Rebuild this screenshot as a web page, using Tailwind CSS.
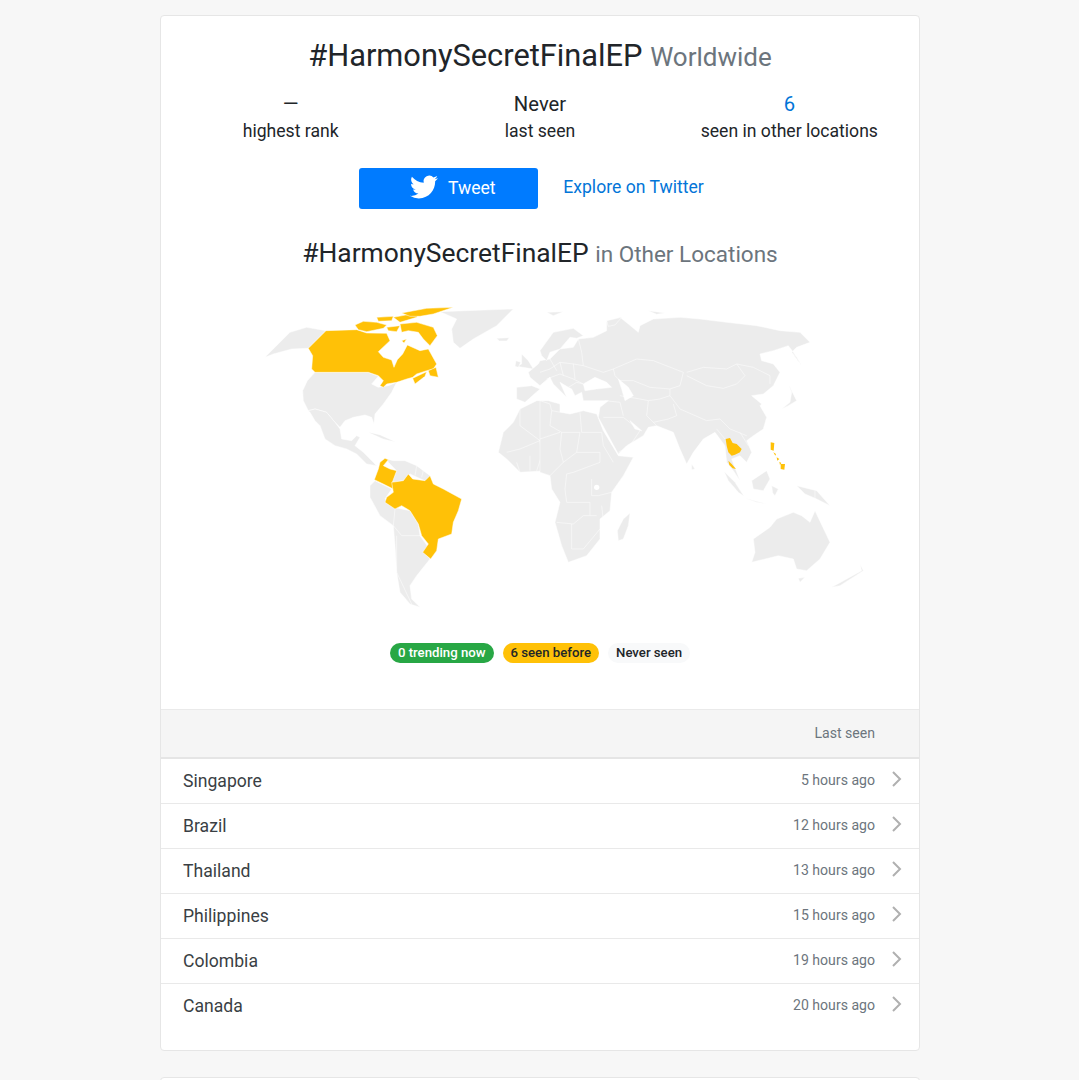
<!DOCTYPE html>
<html>
<head>
<meta charset="utf-8">
<script src="https://cdn.jsdelivr.net/npm/@tailwindcss/browser@4"></script>
</head>
<body class="bg-[#f7f7f7] font-['Roboto',sans-serif] text-[#212529] overflow-hidden h-[1080px]">
<main class="ml-[160px] w-[760px] pt-[15px]">
  <section class="bg-white border border-[#e6e6e6] rounded-[4px] h-[1036px] flex flex-col">
    <h1 class="h-[75px] pt-[20px] text-center text-[30.8px] leading-[40px]">#HarmonySecretFinalEP <span class="text-[26px] text-[#6c757d]">Worldwide</span></h1>
    <div class="grid grid-cols-3 px-[5px] text-center text-[17.6px] leading-[27px]">
      <div><div class="text-[20.24px]">—</div><div>highest rank</div></div>
      <div><div class="text-[20.24px]">Never</div><div>last seen</div></div>
      <div><div class="text-[20.24px] text-[#0275d8]">6</div><div>seen in other locations</div></div>
    </div>
    <div class="flex justify-center items-start mt-[23px] mr-[17px]">
      <a class="w-[179px] h-[41px] pl-[8px] bg-[#007bff] rounded-[3px] flex items-center justify-center gap-[10px] text-white text-[17.6px]">
        <svg class="w-[28px] h-[28px] -mt-[3px]" viewBox="0 0 24 24" fill="#fff"><path d="M23.953 4.57a10 10 0 01-2.825.775 4.958 4.958 0 002.163-2.723c-.951.555-2.005.959-3.127 1.184a4.92 4.92 0 00-8.384 4.482C7.69 8.095 4.067 6.13 1.64 3.162a4.822 4.822 0 00-.666 2.475c0 1.71.87 3.213 2.188 4.096a4.904 4.904 0 01-2.228-.616v.06a4.923 4.923 0 003.946 4.827 4.996 4.996 0 01-2.212.085 4.936 4.936 0 004.604 3.417 9.867 9.867 0 01-6.102 2.105c-.39 0-.779-.023-1.17-.067a13.995 13.995 0 007.557 2.209c9.053 0 13.998-7.496 13.998-13.985 0-.21 0-.42-.015-.63A9.935 9.935 0 0024 4.59z"/></svg>
        <span>Tweet</span>
      </a>
      <a class="ml-[25px] mt-[6px] text-[17.6px] leading-[27px] text-[#0275d8]">Explore on Twitter</a>
    </div>
    <h2 class="mt-[26px] h-[36px] text-center text-[26.4px] leading-[36px]">#HarmonySecretFinalEP <span class="text-[22.5px] text-[#6c757d]">in Other Locations</span></h2>
    <svg class="block w-[758px] h-[330px] mt-[18px] shrink-0" viewBox="161 290 758 330">
      <g transform="translate(220 290) scale(.33333)" fill="#ececec" stroke="#fff" stroke-width="1.5" stroke-linejoin="round">
        <path d="M135 205L175 165L210 130L260 115L318 125L265 178L215 180L160 195Z"/>
        <path d="M660 68L880 60L830 110L760 150L720 178L700 160L695 120L710 90Z"/>
        <path d="M830 148L868 146L860 156L838 156Z"/>
        <path d="M285 250L445 250L475 262L455 285L475 295L505 290L530 280L515 310L490 345L465 375L462 405L455 385L435 378L400 385L375 395L360 415L345 400L320 370L285 360L265 365L250 335L248 305L262 275Z"/>
        <path d="M265 365L285 360L320 370L345 400L360 420L365 450L395 455L410 440L420 445L405 470L430 490L470 530L440 525L410 495L380 480L345 470L315 450L300 410L285 395L270 370Z"/>
        <path d="M445 430L480 438L525 458L490 450Z" stroke-width=".8"/>
        <path d="M500 510L520 515L555 515L590 530L630 560L625 580L570 555L550 575L515 580L530 545L505 520Z"/>
        <path d="M465 575L515 600L495 630L520 655L570 665L595 705L600 740L625 775L610 790L630 810L610 835L590 860L570 890L575 930L600 955L570 945L540 910L530 850L525 770L520 710L480 680L450 625L450 590Z"/>
        <path d="M525 660L520 710L545 740L600 740M530 740L530 850L575 945M550 575L570 555M590 530L585 560M610 545L605 565" fill="none"/>
        <path d="M835 490L850 430L880 400L900 360L950 335L985 335L1020 345L1020 560L980 545L900 550L860 510Z"/>
        <path d="M900 410L960 455L990 430L1020 430M900 410L900 360M860 490L900 480L960 455L965 500L950 545M890 520L900 550M930 500L930 545M985 490L985 550" fill="none"/>
        <path d="M890 295L935 290L960 300L915 340L890 330Z"/>
        <path d="M905 195L925 215L940 240L890 232L905 225Z"/>
        <path d="M888 215L902 220L895 235L885 232Z"/>
        <path d="M265 178L318 125L410 122L440 132L500 133L510 155L475 188L490 205L515 213L522 235L532 212L548 195L562 168L600 185L625 180L650 225L640 240L620 245L590 255L578 265L560 270L530 280L500 285L490 295L480 290L490 275L475 260L445 250L285 250L275 240L278 200Z" fill="#ffc107"/>
        <path d="M578 268L620 248L615 262L585 285Z" fill="#ffc107"/>
        <path d="M625 245L648 235L655 265L630 260Z" fill="#ffc107"/>
        <g fill="#ffc107">
          <path d="M405 108L430 97L470 100L500 108L490 118L440 128L415 122Z"/>
          <path d="M470 85L520 82L515 95L475 97Z"/>
          <path d="M520 85L600 70L590 85L540 100Z"/>
          <path d="M545 72L620 58L700 55L640 75L600 82L570 82Z"/>
          <path d="M540 105L590 100L640 115L652 140L630 170L610 150L595 130L565 125L545 130Z"/>
          <path d="M500 115L540 110L530 128L505 125Z"/>
          <path d="M545 155L560 150L552 162Z"/>
        </g>
        <path d="M495 508L505 512L490 530L510 540L530 545L517 580L520 600L490 585L463 572L475 540L480 520Z" fill="#ffc107"/>
        <path d="M550 575L565 555L578 570L615 575L630 560L640 585L670 600L725 630L715 665L700 700L695 735L655 750L650 785L632 810L608 790L625 765L605 740L595 705L570 665L545 650L525 660L495 640L500 625L520 610L515 580Z" fill="#ffc107"/>
      </g>
      <g transform="translate(540 290) scale(.33333)" fill="#ececec" stroke="#fff" stroke-width="1.5" stroke-linejoin="round">
        <path d="M0 335L30 345L35 365L90 375L130 365L170 375L190 425L235 500L280 505L250 560L215 610L210 665L180 690L180 750L140 800L85 820L65 770L45 700L60 640L35 600L30 560L0 550Z"/>
        <path d="M35 365L30 410L65 430L60 480L70 520L30 560M120 370L125 430L185 430L190 470L220 520M65 430L120 430L110 490L70 520M110 490L180 490L180 520L100 550L80 555L75 600L80 640L150 640M155 570L155 620L175 620L215 610M50 700L100 705L130 680L170 680M95 705L95 780L130 780L180 720M0 450L60 430M150 640L150 680M185 650L190 695" fill="none"/>
        <circle cx="170" cy="595" r="8" fill="#fff" stroke="none"/>
        <path d="M270 672L265 710L250 750L235 755L232 725L250 690Z"/>
        <path d="M-30 265L-35 250L-5 225L0 215L30 210L60 180L100 175L115 150L160 145L200 125L200 100L240 85L265 105L295 130L300 110L340 90L420 85L480 90L560 100L650 110L720 125L780 130L810 160L770 175L755 190L785 230L760 190L745 170L700 185L660 195L665 215L700 225L720 250L700 290L670 315L635 320L665 345L660 350L680 385L670 420L640 440L620 455L635 490L620 520L600 500L575 510L600 575L580 545L560 520L555 470L525 430L490 450L460 490L440 525L420 480L400 430L350 410L325 415L310 440L260 470L235 495L175 385L180 355L205 335L130 335L125 310L105 320L95 300L85 295L60 280L80 325L40 285L30 265L0 290Z"/>
        <path d="M0 185L40 130L100 118L130 140L110 148L90 145L60 180L30 190L20 215L5 200Z"/>
        <path d="M200 95L245 85L225 108L205 112Z"/>
        <path d="M20 70L70 68L40 80Z"/>
        <path d="M325 65L375 72L350 76Z"/>
        <path d="M130 285L165 265L200 280L215 295L170 300L135 305Z" fill="#fff"/>
        <path d="M235 270L265 295L280 320L255 335L245 300Z" fill="#fff"/>
        <path d="M270 395L305 425L285 420Z" fill="#fff"/>
        <path d="M115 150L125 190L130 230L190 250L220 240L290 210L340 215L430 250L420 290L390 300L330 295L280 275L240 275L225 260L220 240M440 250L490 235L560 240L590 225L615 260L590 285L550 298L500 290L440 260M590 225L640 235L690 260L690 285M390 320L420 360L500 395L540 390L570 420L620 440M400 345L410 380L385 390L340 400L320 380L325 335L300 330L240 320M340 400L350 410M195 335L240 340L250 380M190 385L250 385L300 425L270 470L235 490M390 300L390 320L360 330L325 335M530 420L555 450M600 430L625 470" fill="none"/>
        <path d="M0 250L30 240L60 220L100 225L130 230M20 270L60 255L100 270L130 285M60 220L70 260M100 225L105 270M30 210L50 245M85 295L110 280L130 285M0 290L30 265" fill="none"/>
        <path d="M745 285L770 335L745 350L725 360L750 340L755 310Z"/>
        <path d="M755 190L785 230L770 205Z"/>
        <path d="M455 525L465 540L455 542Z"/>
        <path d="M553 548L585 580L612 622L595 610L565 575Z"/>
        <path d="M615 628L680 645L650 640Z"/>
        <path d="M635 575L680 545L690 570L670 605L640 600Z"/>
        <path d="M695 590L715 600L705 620L698 612Z"/>
        <path d="M770 590L830 605L870 650L830 630L795 615Z"/>
        <path d="M825 605L825 640" fill="none"/>
        <path d="M640 750L690 715L710 690L760 670L785 680L810 700L825 665L870 760L840 810L800 845L770 840L760 810L715 800L635 820L645 790Z"/>
        <path d="M775 868L795 865L780 880Z"/>
        <path d="M875 895L965 845L960 825L970 845L900 890Z"/>
        <path d="M557 450L570 447L578 462L590 465L605 480L600 490L585 497L575 500L565 490L560 470Z" fill="#ffc107" stroke="none"/>
        <path d="M565 515L575 525L588 540L578 538L568 528Z" fill="#ffc107" stroke="none"/>
        <path d="M692 460L703 462L701 485L692 482Z" fill="#ffc107" stroke="none"/>
        <path d="M722 525L735 525L733 542L722 540Z" fill="#ffc107" stroke="none"/>
        <path d="M700 490L708 495L706 500ZM710 505L718 510L712 515ZM718 518L724 522L720 528Z" fill="#ffc107" stroke="none"/>
      </g>
    </svg>
    <div class="flex justify-center gap-[9px] mt-[24px] text-[13.2px] font-medium leading-[20px]">
      <span class="h-[20px] px-[8px] rounded-full bg-[#28a745] text-white">0 trending now</span>
      <span class="h-[20px] px-[8px] rounded-full bg-[#ffc107] text-[#212529]">6 seen before</span>
      <span class="h-[20px] px-[8px] rounded-full bg-[#f8f9fa] text-[#212529]">Never seen</span>
    </div>
    <div class="mt-[46px] h-[50px] shrink-0 bg-[#f5f5f5] border-t border-[#eaeaea] border-b-2 border-b-[#e5e5e5] flex items-center justify-end pr-[44px] text-[14.08px] text-[#6c757d]">Last seen</div>
    <ul class="text-[17.6px] text-[#3a3f44]">
      <li class="h-[45px] flex items-center pl-[22px] pr-[17px] border-b border-[#e9e9e9]"><span class="flex-1">Singapore</span><span class="text-[14.08px] text-[#6c757d]">5 hours ago</span><svg class="ml-[15px] w-[12px] h-[16px] -mt-[5px]" viewBox="0 0 12 16" fill="none" stroke="#b0b0b0" stroke-width="2"><path d="M3 1l7 7-7 7"/></svg></li>
      <li class="h-[45px] flex items-center pl-[22px] pr-[17px] border-b border-[#e9e9e9]"><span class="flex-1">Brazil</span><span class="text-[14.08px] text-[#6c757d]">12 hours ago</span><svg class="ml-[15px] w-[12px] h-[16px] -mt-[5px]" viewBox="0 0 12 16" fill="none" stroke="#b0b0b0" stroke-width="2"><path d="M3 1l7 7-7 7"/></svg></li>
      <li class="h-[45px] flex items-center pl-[22px] pr-[17px] border-b border-[#e9e9e9]"><span class="flex-1">Thailand</span><span class="text-[14.08px] text-[#6c757d]">13 hours ago</span><svg class="ml-[15px] w-[12px] h-[16px] -mt-[5px]" viewBox="0 0 12 16" fill="none" stroke="#b0b0b0" stroke-width="2"><path d="M3 1l7 7-7 7"/></svg></li>
      <li class="h-[45px] flex items-center pl-[22px] pr-[17px] border-b border-[#e9e9e9]"><span class="flex-1">Philippines</span><span class="text-[14.08px] text-[#6c757d]">15 hours ago</span><svg class="ml-[15px] w-[12px] h-[16px] -mt-[5px]" viewBox="0 0 12 16" fill="none" stroke="#b0b0b0" stroke-width="2"><path d="M3 1l7 7-7 7"/></svg></li>
      <li class="h-[45px] flex items-center pl-[22px] pr-[17px] border-b border-[#e9e9e9]"><span class="flex-1">Colombia</span><span class="text-[14.08px] text-[#6c757d]">19 hours ago</span><svg class="ml-[15px] w-[12px] h-[16px] -mt-[5px]" viewBox="0 0 12 16" fill="none" stroke="#b0b0b0" stroke-width="2"><path d="M3 1l7 7-7 7"/></svg></li>
      <li class="h-[44px] flex items-center pl-[22px] pr-[17px]"><span class="flex-1">Canada</span><span class="text-[14.08px] text-[#6c757d]">20 hours ago</span><svg class="ml-[15px] w-[12px] h-[16px] -mt-[5px]" viewBox="0 0 12 16" fill="none" stroke="#b0b0b0" stroke-width="2"><path d="M3 1l7 7-7 7"/></svg></li>
    </ul>
  </section>
  <section class="mt-[26px] bg-white border border-[#e6e6e6] rounded-[4px] h-[40px]"></section>
</main>
</body>
</html>
